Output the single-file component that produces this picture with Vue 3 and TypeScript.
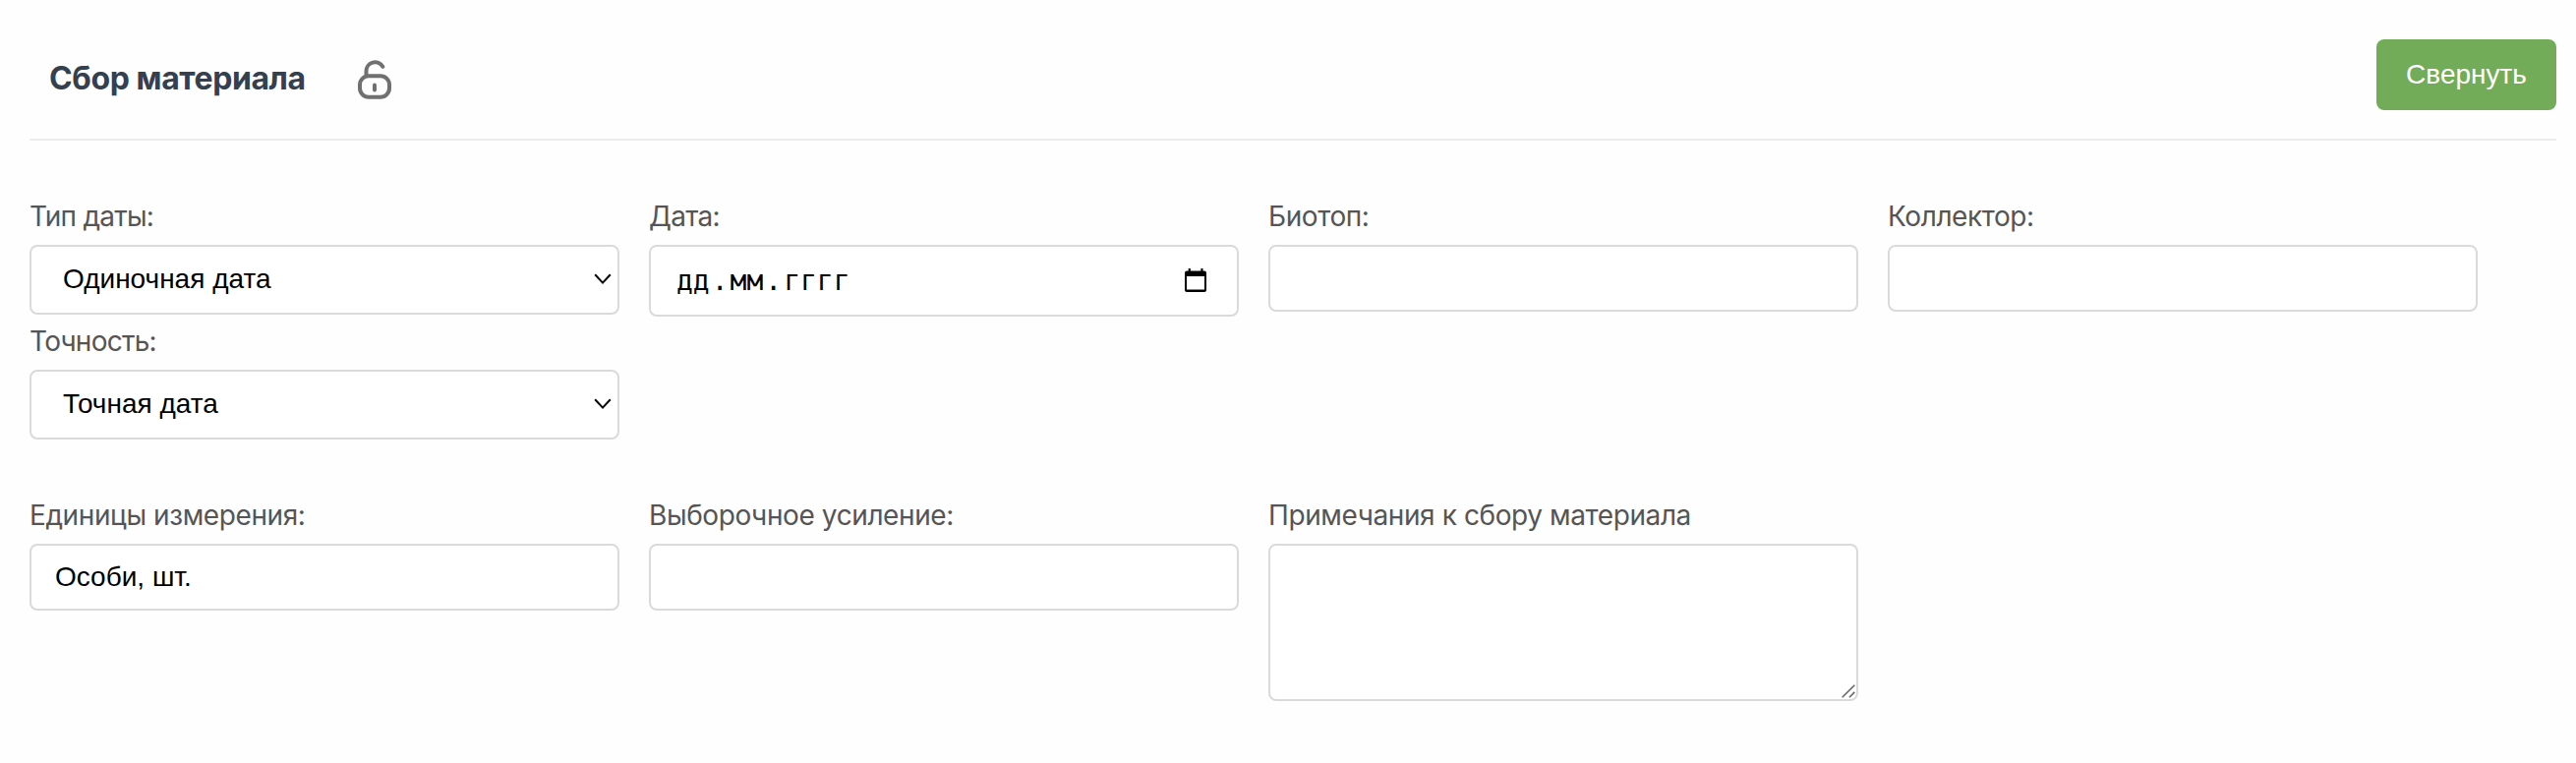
<script setup lang="ts">
import { ref } from 'vue'

const units = ref('Особи, шт.')
const biotope = ref('')
const collector = ref('')
const effort = ref('')
const notes = ref('')
</script>

<template>
  <section class="panel">
    <header class="panel-header">
      <h2 class="title">Сбор материала</h2>
      <svg class="lock" viewBox="0 0 36 41" fill="none" stroke="#707070" stroke-width="4">
        <rect x="3" y="16.3" width="30" height="21.5" rx="9" />
        <path d="M9.5 16V11.7A9 9 0 0 1 26.3 6.8" stroke-linecap="round" />
        <path d="M18 25.4V30.6" stroke-linecap="round" />
      </svg>
      <button class="collapse" type="button">Свернуть</button>
    </header>

    <div class="row">
      <div class="column">
        <div class="field">
          <span class="label narrow">Тип даты:</span>
          <div class="control select">
            <span>Одиночная дата</span>
            <svg class="chevron" viewBox="0 0 18 12"><path d="M1.2 1.3L9 9.6L16.8 1.3" /></svg>
          </div>
        </div>
        <div class="field">
          <span class="label narrow">Точность:</span>
          <div class="control select">
            <span>Точная дата</span>
            <svg class="chevron" viewBox="0 0 18 12"><path d="M1.2 1.3L9 9.6L16.8 1.3" /></svg>
          </div>
        </div>
      </div>
      <div class="field">
        <span class="label narrow">Дата:</span>
        <div class="control date">
          <span class="date-text"><span class="part">дд</span>.<span class="part">мм</span>.<span class="part">гггг</span></span>
          <svg class="calendar" viewBox="0 0 22 24">
            <path fill-rule="evenodd" d="M3.7 0H5.8V2.4H16.4V0H18.5V2.4H20A2 2 0 0 1 22 4.4V22A2 2 0 0 1 20 24H2A2 2 0 0 1 0 22V4.4A2 2 0 0 1 2 2.4H3.7ZM2 8V21.6H20V8Z" />
          </svg>
        </div>
      </div>
      <label class="field">
        <span class="label">Биотоп:</span>
        <input v-model="biotope" class="control input" type="text" />
      </label>
      <label class="field">
        <span class="label">Коллектор:</span>
        <input v-model="collector" class="control input" type="text" />
      </label>
    </div>

    <div class="row">
      <label class="field">
        <span class="label">Единицы измерения:</span>
        <input v-model="units" class="control input" type="text" />
      </label>
      <label class="field">
        <span class="label">Выборочное усиление:</span>
        <input v-model="effort" class="control input" type="text" />
      </label>
      <label class="field">
        <span class="label">Примечания к сбору материала</span>
        <span class="notes">
          <textarea v-model="notes" class="control textarea"></textarea>
          <svg class="grip" viewBox="0 0 14 14"><path d="M0.7 13.3L13.3 0.7M7.9 13.3L13.3 7.9" /></svg>
        </span>
      </label>
    </div>
  </section>
</template>

<style>
body {
  margin: 0;
  background: #fefefe;
}
</style>

<style scoped>
.panel {
  box-sizing: border-box;
  height: 776px;
  padding: 40px 20px 0 30px;
  font-family: Inter, "Liberation Sans", sans-serif;
}
.panel-header {
  display: flex;
  align-items: flex-start;
  padding-bottom: 29px;
  border-bottom: 2px solid #ededed;
}
.title {
  margin: 20px 0 0 20px;
  color: #35404f;
  font-size: 32px;
  font-weight: 700;
  line-height: 40px;
  letter-spacing: -0.4px;
}
.lock {
  width: 36px;
  height: 41px;
  margin: 21px 0 0 52px;
}
.collapse {
  width: 183px;
  height: 72px;
  margin-left: auto;
  padding: 0 0 1px;
  border: 0;
  border-radius: 8px;
  background: #72ac58;
  color: #fff;
  font: 28px "Liberation Sans", sans-serif;
}
.row {
  display: grid;
  grid-template-columns: repeat(4, 600px);
  align-items: start;
  gap: 30px;
  margin-top: 60px;
}
.column {
  display: grid;
  gap: 10px;
}
.field {
  display: flex;
  flex-direction: column;
}
.label {
  margin-bottom: 12px;
  color: #555;
  font-size: 28px;
  line-height: 34px;
  letter-spacing: -0.4px;
}
.narrow {
  letter-spacing: -0.75px;
}
.control {
  box-sizing: border-box;
  width: 100%;
  border: 2px solid #dadada;
  border-radius: 8px;
  background: #fff;
  color: #000;
  font: 28px "Liberation Sans", sans-serif;
  outline: none;
}
.input {
  height: 68px;
  padding: 0 24px 1px;
}
.select {
  display: flex;
  align-items: center;
  justify-content: space-between;
  height: 71px;
  padding: 0 6px 1px 32px;
}
.chevron {
  width: 18px;
  height: 12px;
  fill: none;
  stroke: #000;
  stroke-width: 2;
}
.date {
  display: flex;
  align-items: center;
  justify-content: space-between;
  height: 73px;
  padding: 0 31px 1px 24px;
}
.date-text {
  font-family: "DejaVu Sans Mono", monospace;
}
.part {
  padding: 0 2px;
}
.calendar {
  width: 22px;
  height: 24px;
}
.notes {
  position: relative;
  display: flex;
}
.textarea {
  height: 160px;
  padding: 16px 24px;
  resize: none;
}
.grip {
  position: absolute;
  right: 3px;
  bottom: 3px;
  width: 14px;
  height: 14px;
  fill: none;
  stroke: #666;
  stroke-width: 1.6;
}
</style>
